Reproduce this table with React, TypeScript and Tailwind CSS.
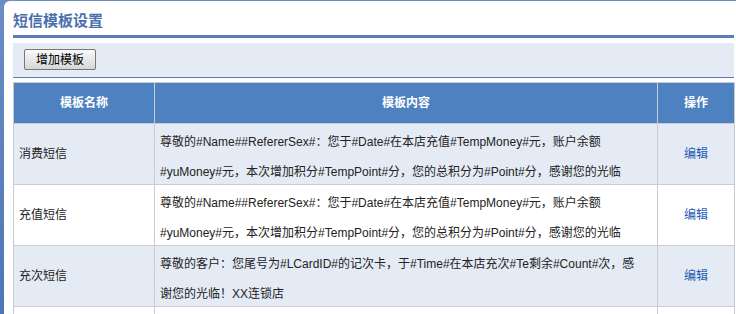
type Template = {
  name: string;
  lines: string[];
};

const templates: Template[] = [
  {
    name: "消费短信",
    lines: [
      "尊敬的#Name##RefererSex#：您于#Date#在本店充值#TempMoney#元，账户余额",
      "#yuMoney#元，本次增加积分#TempPoint#分，您的总积分为#Point#分，感谢您的光临",
    ],
  },
  {
    name: "充值短信",
    lines: [
      "尊敬的#Name##RefererSex#：您于#Date#在本店充值#TempMoney#元，账户余额",
      "#yuMoney#元，本次增加积分#TempPoint#分，您的总积分为#Point#分，感谢您的光临",
    ],
  },
  {
    name: "充次短信",
    lines: [
      "尊敬的客户：您尾号为#LCardID#的记次卡，于#Time#在本店充次#Te剩余#Count#次，感",
      "谢您的光临！XX连锁店",
    ],
  },
];

export default function App() {
  return (
    <div
      className="w-[736px] h-[314px] overflow-hidden bg-gradient-to-b from-[#6a8dc4] to-[#4f76b3] pl-[4px] pt-[1px] text-[12px] text-[#222]"
      style={{ fontFamily: '"Liberation Sans", Arial, "Noto Sans CJK SC", sans-serif' }}
    >
      <div className="h-full bg-white rounded-tl-[6px] pl-[9px] pr-[2px]">
        <div className="pt-[10px] h-[34px]">
          <h1 className="text-[15px] leading-[20px] font-bold text-[#4a6fae]">短信模板设置</h1>
        </div>
        <div className="h-[3px] bg-[#5a7db8]" />

        <div className="mt-[5px] h-[35px] bg-[#e4ebf5] border-b border-[#5a7db8] pl-[11px] pt-[6px]">
          <button className="w-[72px] h-[21px] rounded-[2px] border border-[#777] bg-gradient-to-b from-[#fafafa] to-[#d6d6d6] text-[12px] leading-none text-black">
            增加模板
          </button>
        </div>

        <table className="mt-[4px] w-[721px] table-fixed border-collapse">
          <colgroup>
            <col className="w-[141px]" />
            <col className="w-[503px]" />
            <col className="w-[77px]" />
          </colgroup>
          <thead>
            <tr className="h-[41px] bg-[#4d81bf] text-white">
              <th className="border border-[#c9cdd3] font-bold text-[12px]">模板名称</th>
              <th className="border border-[#c9cdd3] font-bold text-[12px]">模板内容</th>
              <th className="border border-[#c9cdd3] font-bold text-[12px]">操作</th>
            </tr>
          </thead>
          <tbody>
            {templates.map((t, i) => (
              <tr key={t.name} className={i % 2 === 0 ? "h-[61px] bg-[#e4ebf5]" : "h-[61px] bg-white"}>
                <td className="border border-[#c9cdd3] pl-[5px]">{t.name}</td>
                <td className="border border-[#c9cdd3] pl-[5px] align-top whitespace-nowrap">
                  <div className="pt-[3px] -mb-[3px] leading-[30px]">
                    {t.lines.map((line) => (
                      <div key={line}>{line}</div>
                    ))}
                  </div>
                </td>
                <td className="border border-[#c9cdd3] text-center">
                  <a href="#" className="text-[#1e5cb3]">
                    编辑
                  </a>
                </td>
              </tr>
            ))}
            <tr className="h-[61px] bg-white">
              <td className="border border-[#c9cdd3]" />
              <td className="border border-[#c9cdd3]" />
              <td className="border border-[#c9cdd3]" />
            </tr>
          </tbody>
        </table>
      </div>
    </div>
  );
}
